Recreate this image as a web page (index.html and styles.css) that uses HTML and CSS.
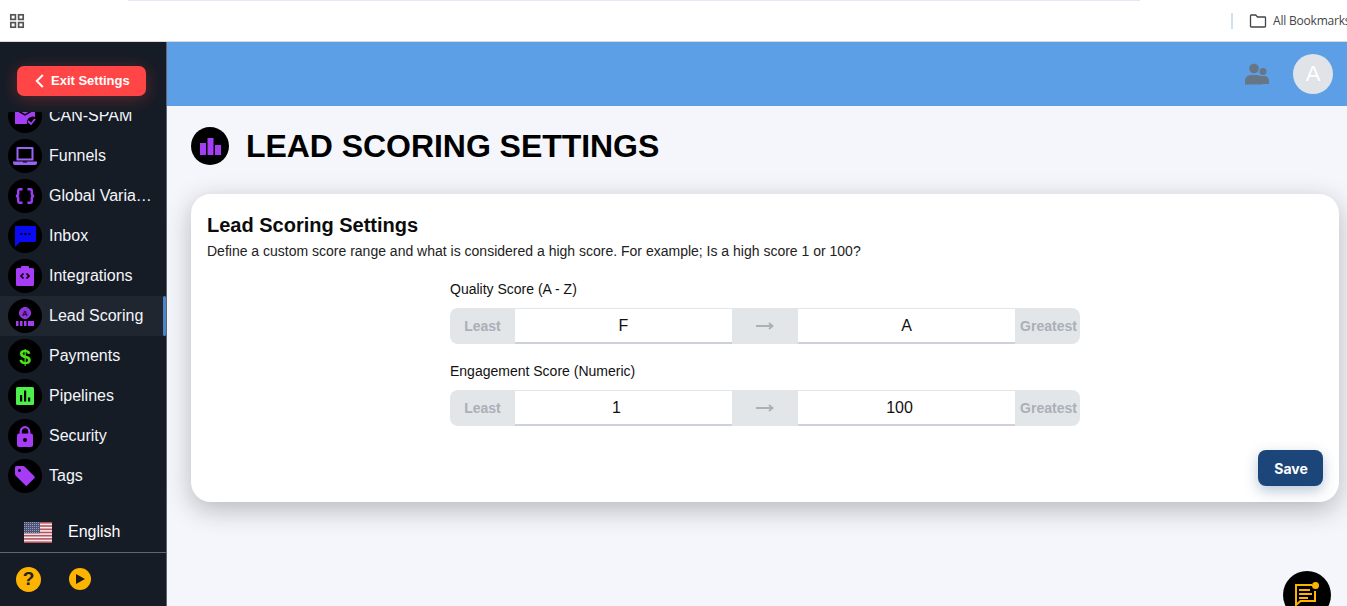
FILE: index.html
```html
<!DOCTYPE html>
<html lang="en">
<head>
<meta charset="utf-8">
<title>Lead Scoring Settings</title>
<link rel="stylesheet" href="styles.css">
</head>
<body>
<div class="browserbar">
  <svg class="apps" width="16" height="16" viewBox="0 0 16 16"><g fill="none" stroke="#555" stroke-width="1.7"><rect x="1.800" y="1.800" width="4.600" height="4.600"/><rect x="9.600" y="1.800" width="4.600" height="4.600"/><rect x="1.800" y="9.600" width="4.600" height="4.600"/><rect x="9.600" y="9.600" width="4.600" height="4.600"/></g></svg>
  <div class="tabline"></div>
  <div class="bookmarks">
    <span class="sep"></span>
    <svg class="folder" width="18" height="14" viewBox="0 0 18 14"><path d="M1.500 12.200V1.800q0-.8.8-.8h4.400l1.800 2h7.200q.8 0 .8.8v8.400q0 .8-.8.8H2.300q-.8 0-.8-.8z" fill="none" stroke="#444" stroke-width="1.300"/></svg>
    <span class="bmtext">All Bookmarks</span>
  </div>
</div>
<div class="app">
  <aside class="sidebar">
    <div class="exitwrap">
      <button class="exit"><svg class="chev" width="9" height="14" viewBox="0 0 9 14"><path d="M7.800 1 1.800 7l6 6" fill="none" stroke="#fff" stroke-width="2"/></svg><span class="exittext">Exit Settings</span></button>
    </div>
    <nav class="nav">
      <ul class="navlist">
        <li class="item"><span class="ic"><svg width="22" height="22" viewBox="0 0 22 22"><path d="M1 3h20v9a6 6 0 0 0-8 7H1z" fill="#a53df5"/><path d="M1 4l10 6 10-6" fill="none" stroke="#000" stroke-width="1.500"/><path d="M14 16l3 3 4-5" fill="none" stroke="#a53df5" stroke-width="1.800"/></svg></span><span class="lbl">CAN-SPAM</span></li>
        <li class="item"><span class="ic"><svg width="24" height="18" viewBox="0 0 24 18"><path fill="#9a63f5" fill-rule="evenodd" d="M3.500 1q0-1 1-1h15q1 0 1 1v12.500h-17zM5.500 2v9.500h13V2zM0 14.500h24v1.500q0 2-2 2H2q-2 0-2-2z"/><rect x="10" y="14.500" width="4" height="1" fill="#000"/></svg></span><span class="lbl">Funnels</span></li>
        <li class="item"><span class="ic"><svg width="20" height="16" viewBox="0 0 20 16"><path d="M7.500 1.200H5Q3.200 1.200 3.200 3v3Q3.200 7.500 1.200 8 3.200 8.500 3.200 10v3q0 1.800 1.800 1.800h2.500M12.500 1.200H15q1.800 0 1.800 1.800v3q0 1.500 2 2-2 .5-2 2v3q0 1.800-1.800 1.800h-2.500" fill="none" stroke="#9a3df5" stroke-width="2.400"/></svg></span><span class="lbl">Global Variables</span></li>
        <li class="item"><span class="ic"><svg width="21" height="21" viewBox="0 0 21 21"><path fill="#0a0af5" d="M1 0h19q1 0 1 1v14q0 1-1 1H5l-5 5V1q0-1 1-1z"/><g fill="#000"><rect x="5.500" y="7" width="2" height="2"/><rect x="9.500" y="7" width="2" height="2"/><rect x="13.500" y="7" width="2" height="2"/></g></svg></span><span class="lbl">Inbox</span></li>
        <li class="item"><span class="ic"><svg width="18" height="20" viewBox="0 0 18 20"><path fill="#a63cf5" d="M1.500 2H5V1q0-1 1-1h6q1 0 1 1v1h3.500Q18 2 18 3.500v15q0 1.500-1.500 1.500h-15Q0 20 0 18.500v-15Q0 2 1.500 2z"/><path d="M7.500 7.500 5 10l2.500 2.500M10.500 7.500 13 10l-2.500 2.500" fill="none" stroke="#000" stroke-width="1.700"/></svg></span><span class="lbl">Integrations</span></li>
        <li class="item active"><span class="ic"><svg width="18" height="19" viewBox="0 0 18 19"><circle cx="9" cy="6" r="5.500" fill="#8a35d6" stroke="#a63cf5"/><text class="scorea" x="9" y="9" text-anchor="middle">A</text><g fill="#a63cf5"><rect x="0" y="14" width="2.500" height="5"/><rect x="4" y="14" width="2.500" height="5"/><rect x="8" y="14" width="2.500" height="5"/><rect x="12" y="14" width="6" height="5"/></g></svg></span><span class="lbl">Lead Scoring</span></li>
        <li class="item"><span class="ic"><span class="dollar">$</span></span><span class="lbl">Payments</span></li>
        <li class="item"><span class="ic"><svg width="18" height="18" viewBox="0 0 18 18"><rect width="18" height="18" rx="1.500" fill="#4df04a"/><g fill="#000"><rect x="4" y="8" width="2.200" height="6.500"/><rect x="8" y="3.500" width="2.200" height="11"/><rect x="12" y="10.500" width="2.200" height="4"/></g></svg></span><span class="lbl">Pipelines</span></li>
        <li class="item"><span class="ic"><svg width="16" height="21" viewBox="0 0 16 21"><path d="M3.700 8V5.500a4.300 4.300 0 0 1 8.600 0V8" fill="none" stroke="#a63cf5" stroke-width="2.200"/><rect x="0" y="7.500" width="16" height="13.500" rx="2" fill="#a63cf5"/><circle cx="8" cy="14" r="2" fill="#000"/></svg></span><span class="lbl">Security</span></li>
        <li class="item"><span class="ic"><svg width="20" height="20" viewBox="0 0 20 20"><path fill="#a63cf5" fill-rule="evenodd" d="M1.500 0H8q1 0 2 1l9.300 9.300q1 1 0 2l-7 7q-1 1-2 0L1 10Q0 9 0 8V1.500Q0 0 1.500 0zM4.500 3a1.500 1.500 0 1 0 .01 0z"/></svg></span><span class="lbl">Tags</span></li>
      </ul>
    </nav>
    <div class="lang">
      <svg class="flag" width="28" height="21" viewBox="0 0 28 21"><defs><pattern id="stars" width="2" height="2" patternUnits="userSpaceOnUse"><rect width="2" height="2" fill="#4e5478"/><rect width="1" height="1" fill="#9aa0bb"/></pattern></defs><rect width="28" height="21" fill="#f2eeee"/><g fill="#b9535f"><rect width="28" height="1.600"/><rect y="3.200" width="28" height="1.600"/><rect y="6.500" width="28" height="1.600"/><rect y="9.700" width="28" height="1.600"/><rect y="12.900" width="28" height="1.600"/><rect y="16.100" width="28" height="1.600"/><rect y="19.400" width="28" height="1.600"/></g><rect width="16" height="11.300" fill="url(#stars)"/></svg>
      <span class="langname">English</span>
    </div>
    <div class="foot">
      <span class="round help">?</span>
      <span class="round play"><svg width="12" height="12" viewBox="0 0 12 12"><path d="M2 1l9 5-9 5z" fill="#1a1a1a"/></svg></span>
    </div>
  </aside>
  <main class="main">
    <header class="topbar">
      <svg class="people" width="24" height="22" viewBox="0 0 24 22"><g fill="#677685"><circle cx="9" cy="5.500" r="4.800"/><circle cx="18" cy="8.500" r="3.500"/><path d="M0 21.500v-3Q0 12 6 12h6q5 0 5.500 6v3.500z"/><path d="M15 13h5q4 .5 4 5.500v2.500h-7z"/></g></svg>
      <span class="avatar">A</span>
    </header>
    <div class="content">
      <div class="pagehead">
        <span class="pageicon"><svg width="21" height="17" viewBox="0 0 21 17"><g fill="#a53df5"><rect x="0" y="5" width="6" height="12"/><rect x="7.500" y="0" width="6" height="17"/><rect x="15" y="7" width="6" height="10"/></g></svg></span>
        <h1>LEAD SCORING SETTINGS</h1>
      </div>
      <section class="card">
        <h2>Lead Scoring Settings</h2>
        <p class="desc">Define a custom score range and what is considered a high score. For example; Is a high score 1 or 100?</p>
        <div class="form">
          <label class="flabel">Quality Score (A - Z)</label>
          <div class="range">
            <span class="addon">Least</span>
            <span class="val">F</span>
            <span class="arrow"><svg width="18" height="8" viewBox="0 0 18 8"><path d="M0 4h16M13 1l3.500 3L13 7" fill="none" stroke="#a9b0b7" stroke-width="1.800"/></svg></span>
            <span class="val">A</span>
            <span class="addon">Greatest</span>
          </div>
          <label class="flabel second">Engagement Score (Numeric)</label>
          <div class="range">
            <span class="addon">Least</span>
            <span class="val val-num">1</span>
            <span class="arrow"><svg width="18" height="8" viewBox="0 0 18 8"><path d="M0 4h16M13 1l3.500 3L13 7" fill="none" stroke="#a9b0b7" stroke-width="1.800"/></svg></span>
            <span class="val val-num">100</span>
            <span class="addon">Greatest</span>
          </div>
        </div>
        <div class="actions"><button class="save">Save</button></div>
      </section>
    </div>
    <button class="chat"><svg width="26" height="26" viewBox="0 0 26 26"><path d="M18 3H2v20l4.500-4H21V9" fill="none" stroke="#fdb400" stroke-width="2"/><g fill="#fdb400"><rect x="5" y="7" width="11" height="2"/><rect x="5" y="11" width="13" height="2"/><rect x="5" y="15" width="9" height="2"/><circle cx="21.500" cy="3.500" r="3.500"/></g></svg></button>
  </main>
</div>
</body>
</html>
```
FILE: styles.css
```css
* { box-sizing: border-box; }
html, body { margin: 0; height: 100%; overflow: hidden; }
body { font-family: "Liberation Sans", Arial, sans-serif; background: #fff; color: #000; }

.browserbar { height: 42px; background: #fff; border-bottom: 1px solid #d9d9d9; display: flex; align-items: center; padding-left: 9px; position: relative; }
.tabline { position: absolute; left: 128px; top: 0; width: 1012px; height: 1px; background: #e4e8f5; }
.bookmarks { margin-left: auto; display: flex; align-items: center; white-space: nowrap; width: 116px; overflow: hidden; flex: none; }
.sep { width: 2px; height: 16px; background: #cfdff7; margin-right: 16px; flex: none; }
.folder { flex: none; }
.bmtext { font-size: 12px; color: #444; margin-left: 6px; font-family: "Open Sans", sans-serif; letter-spacing: -.2px; flex: none; }

.app { display: flex; height: 564px; }
.sidebar { width: 167px; flex: none; background: #161c26; border-right: 1px solid #5f6670; display: flex; flex-direction: column; color: #fff; }
.exitwrap { height: 70px; padding: 24px 0 0 17px; flex: none; }
.exit { width: 129px; height: 30px; border: 0; border-radius: 7px; background: #ff4545; color: #fff; font: bold 13px "Liberation Sans", sans-serif; display: flex; align-items: center; padding: 0 0 0 18px; gap: 7px; box-shadow: 0 3px 16px rgba(255, 69, 69, .3); }
.exittext { padding-bottom: 2px; }
.chev { flex: none; }

.nav { height: 384px; overflow: hidden; flex: none; }
.navlist { list-style: none; margin: -16px 0 0; padding: 0; }
.item { height: 40px; display: flex; align-items: center; padding-left: 8px; position: relative; }
.item.active { background: #1f2630; }
.item.active::after { content: ""; position: absolute; right: 0; top: 0; width: 3px; height: 40px; background: #4a86c8; border-radius: 2px; }
.ic { width: 34px; height: 34px; border-radius: 50%; background: #000; display: flex; align-items: center; justify-content: center; flex: none; }
.lbl { margin-left: 7px; font-size: 16px; color: #f4f6fb; white-space: nowrap; overflow: hidden; text-overflow: ellipsis; width: 103px; }
.dollar { color: #4fe01a; font: bold 21px "Liberation Sans", sans-serif; line-height: 1; }
.scorea { font: bold 8px "Liberation Sans", sans-serif; fill: #1a0a30; }

.lang { height: 57px; flex: none; display: flex; align-items: center; padding: 16px 0 0 24px; border-bottom: 1px solid #5f6670; }
.flag { flex: none; }
.langname { margin-left: 16px; font-size: 16px; }
.foot { flex: 1; display: flex; align-items: center; padding: 0 0 0 16px; gap: 28px; margin-top: -1px; }
.round { border-radius: 50%; background: #fdb400; display: flex; align-items: center; justify-content: center; flex: none; }
.help { width: 25px; height: 25px; color: #222; font: bold 19px "Liberation Sans", sans-serif; }
.play { width: 22px; height: 22px; }

.main { flex: 1; background: #f4f6fb; position: relative; min-width: 0; }
.topbar { height: 64px; background: #5c9fe6; display: flex; align-items: center; justify-content: flex-end; padding-right: 14px; gap: 24px; }
.people { flex: none; }
.avatar { width: 40px; height: 40px; border-radius: 50%; background: #e0e3e7; color: #fff; font-size: 22px; display: flex; align-items: center; justify-content: center; }
.content { padding: 21px 8px 0 24px; }
.pagehead { display: flex; align-items: center; height: 38px; gap: 17px; }
.pageicon { width: 38px; height: 38px; border-radius: 50%; background: #000; display: flex; align-items: center; justify-content: center; }
h1 { margin: 0; font-size: 32px; font-weight: 700; line-height: 37px; letter-spacing: -.05px; }
.card { margin-top: 28px; height: 309px; background: #fff; border-radius: 20px; box-shadow: 0 8px 26px rgba(30, 30, 40, .28); padding: 20px 16px 16px; position: relative; border-top: 1px solid #e6e6ea; }
h2 { margin: 0; font-size: 20px; line-height: 22px; font-weight: 700; color: #0c0c0c; }
.desc { margin: 5px 0 0; font-size: 14px; line-height: 20px; color: #222; }
.form { width: 630px; margin: 18px 0 0 243px; }
.flabel { display: block; font-size: 14px; line-height: 20px; color: #111; margin-bottom: 9px; }
.flabel.second { margin-top: 17px; }
.range { height: 36px; display: flex; background: #e3e6e9; border-radius: 8px; overflow: hidden; }
.addon { display: flex; align-items: center; justify-content: center; font-size: 14px; font-weight: 700; color: #a9b0b7; flex: none; width: 65px; }
.addon:last-child { padding-left: 2px; }
.val { width: 217px; flex: none; background: #fff; border-bottom: 2px solid #ced2d8; border-top: 1px solid #e3e6e9; font-size: 16px; display: flex; align-items: center; justify-content: center; color: #111; }
.val-num { padding-right: 14px; }
.arrow { width: 66px; flex: none; display: flex; align-items: center; justify-content: center; }
.actions { position: absolute; right: 16px; bottom: 16px; }
.save { width: 65px; height: 36px; border: 0; border-radius: 8px; background: #1c4679; color: #fff; font: bold 14px Inter, "Liberation Sans", sans-serif; padding: 0 0 0 1px; box-shadow: 0 5px 14px rgba(28, 70, 121, .3); }
.chat { position: absolute; left: 1116px; top: 529px; width: 48px; height: 48px; border: 0; border-radius: 50%; background: #000; padding: 0; display: flex; align-items: center; justify-content: center; }
```
